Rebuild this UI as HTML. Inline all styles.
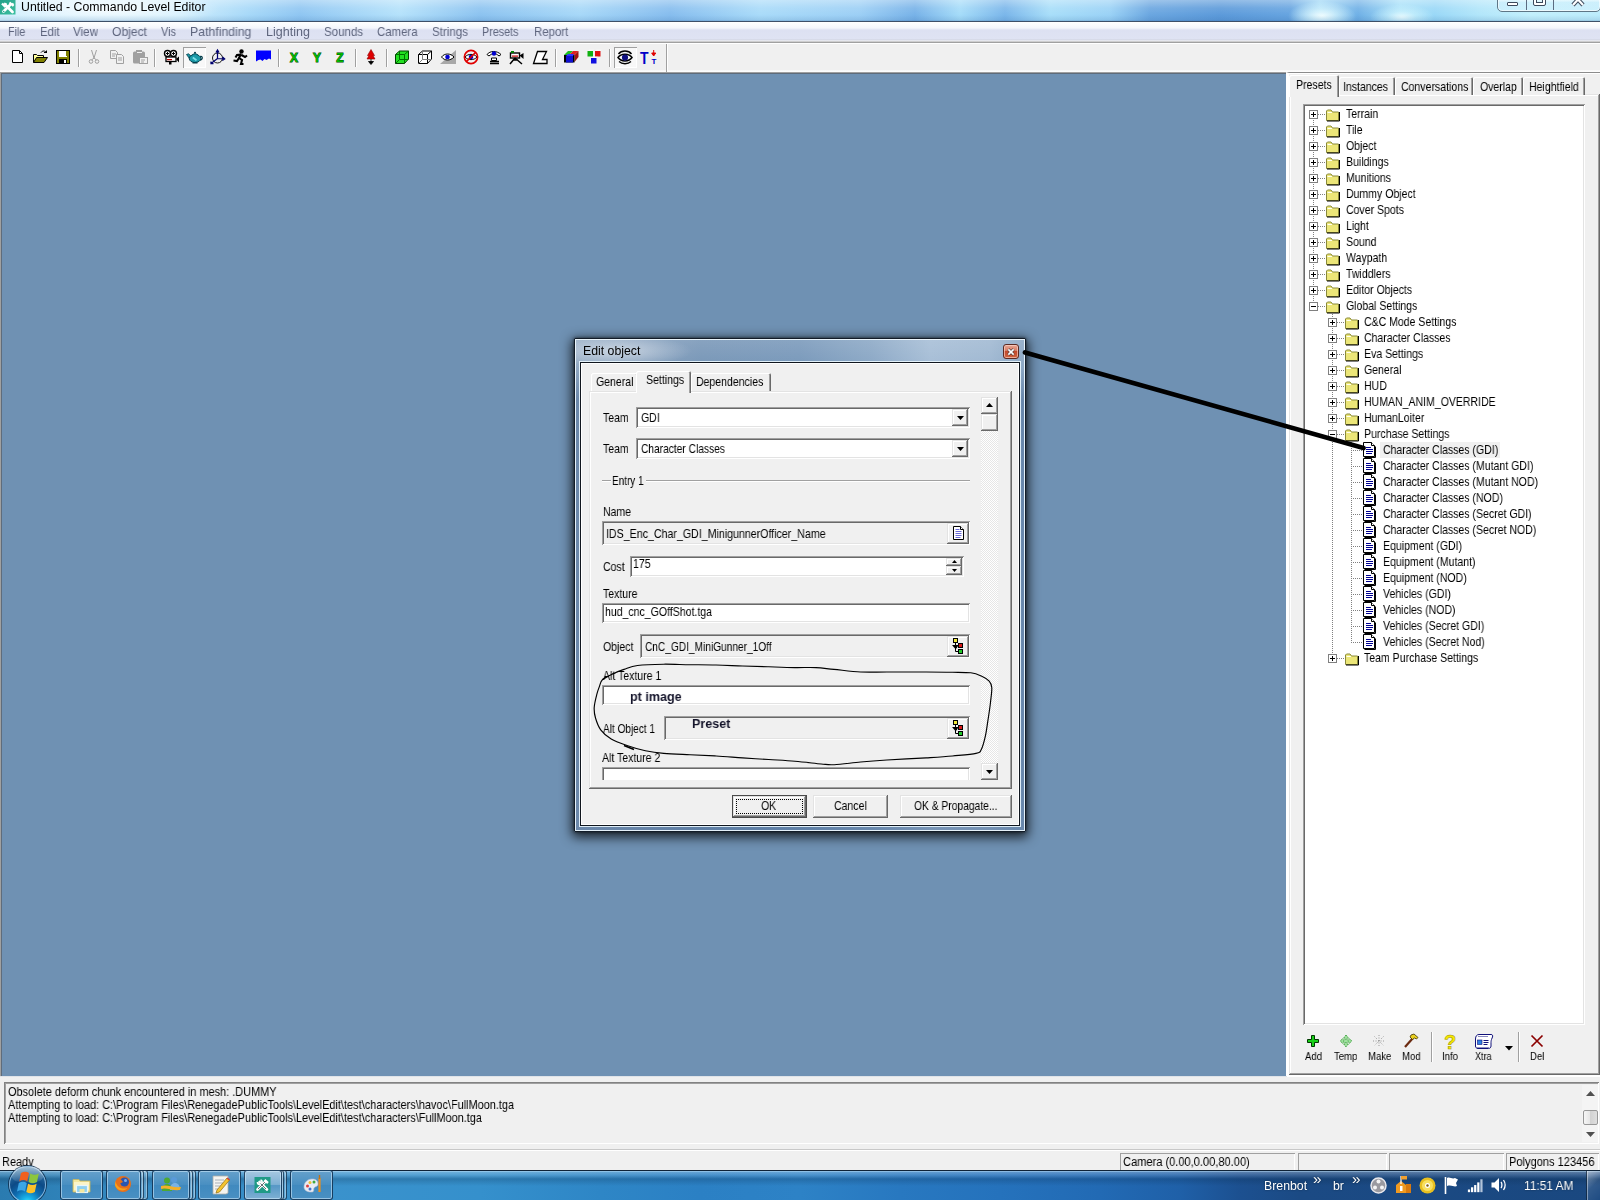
<!DOCTYPE html><html><head><meta charset="utf-8"><title>Untitled - Commando Level Editor</title><style>
*{box-sizing:border-box;margin:0;padding:0}
html,body{width:1600px;height:1200px;overflow:hidden}
body{position:relative;background:#f0f0f0;font-family:"Liberation Sans",sans-serif;font-size:12px;color:#000;line-height:1}
.a{position:absolute}
.t{position:absolute;white-space:pre;transform-origin:0 50%;line-height:14px;height:14px;will-change:transform}
.ms{font-size:12.6px;transform:scaleX(.836)}
.sunk{box-shadow:inset 1px 1px #a0a0a0,inset -1px -1px #fff,inset 2px 2px #696969,inset -2px -2px #e3e3e3}
.rais{box-shadow:inset -1px -1px #696969,inset 1px 1px #e3e3e3,inset -2px -2px #a0a0a0,inset 2px 2px #fff;background:#f0f0f0}
.thin{box-shadow:inset 1px 1px #a0a0a0,inset -1px -1px #fff}
.sep{position:absolute;width:2px;border-left:1px solid #a0a0a0;border-right:1px solid #fff}
svg{position:absolute;overflow:visible}
#title{left:0;top:0;width:1600px;height:22px;
 background:
 linear-gradient(to bottom,rgba(255,255,255,.35) 0,rgba(255,255,255,.1) 8px,rgba(255,255,255,0) 15px,rgba(30,80,140,.12) 20px,rgba(30,80,140,.3) 21px,#3e5068 21px,#3e5068 22px),
 radial-gradient(ellipse 34px 15px at 1322px 16px,rgba(240,253,255,1),rgba(225,250,255,.6) 45%,rgba(220,250,255,0)),
 radial-gradient(ellipse 32px 13px at 1402px 17px,rgba(235,252,255,.95),rgba(215,248,255,.5) 45%,rgba(200,245,255,0)),
 radial-gradient(ellipse 110px 18px at 110px 9px,rgba(255,255,255,.8),rgba(255,255,255,0)),
 linear-gradient(to right,#d4f0fd 0,#cfeefd 180px,#a6d8f8 250px,#8fc6f2 300px,#b5e2fb 400px,#8cc3f0 480px,#a7d8f8 580px,#86bdee 670px,#a9dbf9 760px,#9ccff5 860px,#77b2e8 915px,#a5dcf9 960px,#7ab6ea 1005px,#a8def9 1050px,#9ad2f6 1110px,#6aa6e0 1150px,#5c9ada 1220px,#66a4e0 1290px,#9bd6f6 1320px,#6fb0e6 1358px,#a6e0f9 1400px,#9ad8f7 1435px,#b2e6fa 1480px,#c2effc 1530px,#bcecfc 1600px)}
#menu{left:0;top:22px;width:1600px;height:22px;background:linear-gradient(to bottom,#fff 0,#f4f6fc 6px,#e9ecf7 7px,#dde1f2 8px,#dfe3f3 17px,#cfd2de 18px,#fbfbfd 19px,#a0a0a0 20px,#a0a0a0 21px,#fff 21px)}
#menu .t{color:#5f667e;font-size:12.4px;top:3px;transform:scaleX(1.0)}
#vp{left:0;top:72px;width:1286px;height:1004px;background:#6f91b3;border-left:1px solid #a0a0a0;border-top:1px solid #a0a0a0;box-shadow:inset 1px 1px #5f6c7b}
</style></head><body>
<div id="title" class="a"></div>
<svg style="left:0;top:0" width="16" height="16" viewBox="0 0 16 16"><defs><linearGradient id="gi" x1="0" y1="0" x2="1" y2="1"><stop offset="0" stop-color="#25a088"/><stop offset="1" stop-color="#3cc0a0"/></linearGradient></defs><rect width="15.500" height="14.500" fill="url(#gi)"/><path d="M3.500 11.500L10.500 4.500" stroke="#fff" stroke-width="2.800" stroke-linecap="round"/><path d="M12.500 12L6 5.500" stroke="#fff" stroke-width="2.800" stroke-linecap="round"/><path d="M3 5.500l1.500-3 2.500 1-1 3.500z" fill="#fff"/><path d="M2 3.500l3.500 3.500" stroke="#fff" stroke-width="2.400"/><path d="M9.500 2.500l4 3.500M13.500 3.500l-1.500 1.500" stroke="#fff" stroke-width="2.200"/><circle cx="3.700" cy="11.500" r=".8" fill="#2aa890"/></svg>
<div class="t" style="left:21px;top:0px;font-size:12.3px;transform:scaleX(1.0)">Untitled - Commando Level Editor</div>
<div class="a" style="left:1497px;top:-8px;width:104px;height:20px;border:1px solid #5f7686;border-radius:0 0 5px 5px;background:linear-gradient(to bottom,rgba(255,255,255,.55),rgba(255,255,255,.3) 45%,rgba(200,235,250,.3) 50%,rgba(220,245,255,.45));box-shadow:inset 0 0 0 1px rgba(255,255,255,.6)"></div>
<div class="a" style="left:1526px;top:0;width:1px;height:10px;background:#5b6b80"></div><div class="a" style="left:1553px;top:0;width:1px;height:10px;background:#5b6b80"></div>
<div class="a" style="left:1507px;top:2px;width:11px;height:4px;border:1px solid #3d4a5c;background:#fff;border-radius:1px"></div>
<div class="a" style="left:1534px;top:-4px;width:11px;height:9px;border:2px solid #fff;outline:1px solid #3d4a5c;border-radius:1px;box-shadow:inset 0 0 0 1px #3d4a5c"></div>
<svg style="left:1571px;top:-4px" width="14" height="10" viewBox="0 0 14 10"><path d="M2 -2 L12 9 M12 -2 L2 9" stroke="#3d4a5c" stroke-width="4.2"/><path d="M2 -2 L12 9 M12 -2 L2 9" stroke="#fff" stroke-width="2.2"/></svg>
<div id="menu" class="a">
<div class="t" style="left:7.5px;transform:scaleX(0.87)">File</div>
<div class="t" style="left:39.5px;transform:scaleX(0.915)">Edit</div>
<div class="t" style="left:73px;transform:scaleX(0.94)">View</div>
<div class="t" style="left:112px;transform:scaleX(0.977)">Object</div>
<div class="t" style="left:161px;transform:scaleX(0.885)">Vis</div>
<div class="t" style="left:190px;transform:scaleX(0.99)">Pathfinding</div>
<div class="t" style="left:266px;transform:scaleX(1.01)">Lighting</div>
<div class="t" style="left:324px;transform:scaleX(0.93)">Sounds</div>
<div class="t" style="left:377px;transform:scaleX(0.92)">Camera</div>
<div class="t" style="left:432px;transform:scaleX(0.935)">Strings</div>
<div class="t" style="left:482px;transform:scaleX(0.868)">Presets</div>
<div class="t" style="left:533.5px;transform:scaleX(0.922)">Report</div>
</div>
<div class="a" style="left:0;top:44px;width:1600px;height:28px;background:#f0f0f0"></div>
<div class="a" style="left:0;top:70px;width:1600px;height:2px;background:linear-gradient(#f6f6f6,#fff)"></div>
<div class="a" style="left:183px;top:47px;width:23px;height:21px;background:#f8f8f8;box-shadow:inset 1px 1px #a0a0a0,inset -1px -1px #fff"></div>
<div class="a" style="left:614px;top:47px;width:23px;height:21px;background:#f8f8f8;box-shadow:inset 1px 1px #a0a0a0,inset -1px -1px #fff"></div>
<svg style="left:9px;top:49px" width="16" height="16" viewBox="0 0 16 16"><path d="M3.5 1.5h7l3 3v9h-10z" fill="#fff" stroke="#000"/><path d="M10.5 1.5v3h3" fill="none" stroke="#000"/></svg>
<svg style="left:32px;top:49px" width="16" height="16" viewBox="0 0 16 16"><path d="M1.5 13.5v-8h3l1 1h6v2" fill="#ffff99" stroke="#000"/><path d="M1.5 13.5l3-5h11l-3.5 5z" fill="#808000" stroke="#000"/><path d="M9 3.5c1.5-2 4-2 5.5 0M14.5 4v-2.5M14.5 3.5h-2.5" stroke="#000" fill="none"/></svg>
<svg style="left:55px;top:49px" width="16" height="16" viewBox="0 0 16 16"><rect x="1.5" y="1.5" width="13" height="13" fill="#808000" stroke="#000"/><rect x="4" y="2" width="8" height="6" fill="#fff"/><rect x="11" y="2" width="1" height="5" fill="#808000"/><rect x="4" y="10" width="8" height="4" fill="#000"/><rect x="9" y="11" width="2" height="3" fill="#fff"/></svg>
<div class="sep" style="left:78px;top:49px;height:18px"></div>
<svg style="left:86px;top:49px" width="16" height="16" viewBox="0 0 16 16"><path d="M5.5 1l2.5 8 2.5-8M8 9l-2.5 2M8 9l2.5 2" stroke="#a0a0a0" fill="none"/><circle cx="5" cy="12.5" r="1.8" fill="none" stroke="#a0a0a0"/><circle cx="11" cy="12.5" r="1.8" fill="none" stroke="#a0a0a0"/></svg>
<svg style="left:109px;top:49px" width="16" height="16" viewBox="0 0 16 16"><path d="M1.5 1.5h5l2 2v6h-7z" fill="#f0f0f0" stroke="#a0a0a0"/><path d="M7.5 5.5h5l2 2v7h-7z" fill="#f0f0f0" stroke="#a0a0a0"/><path d="M3 5h4M3 7h3M9 9h4M9 11h4" stroke="#a0a0a0"/></svg>
<svg style="left:132px;top:49px" width="16" height="16" viewBox="0 0 16 16"><rect x="1" y="2.5" width="12" height="12" rx="1.5" fill="#a0a0a0"/><rect x="4" y="1" width="6" height="3" fill="#a0a0a0"/><rect x="5" y="3" width="5" height="1" fill="#f0f0f0"/><rect x="7.5" y="8.5" width="8" height="6" fill="#f0f0f0" stroke="#a0a0a0"/><path d="M9 11h4M9 13h3" stroke="#a0a0a0"/></svg>
<div class="sep" style="left:154px;top:49px;height:18px"></div>
<svg style="left:163px;top:49px" width="16" height="16" viewBox="0 0 16 16"><circle cx="4.5" cy="4.5" r="3" fill="#fff" stroke="#000" stroke-width="1.4"/><circle cx="10.5" cy="4.5" r="3" fill="#fff" stroke="#000" stroke-width="1.4"/><path d="M4.5 3v3M3 4.5h3M10.5 3v3M9 4.5h3" stroke="#000"/><rect x="3" y="8" width="10" height="4.5" fill="#fff" stroke="#000" stroke-width="1.3"/><path d="M13 10l3-2.5v6z" fill="#000"/><rect x="4" y="10" width="5" height="1.2" fill="#c00000"/><rect x="6" y="12.5" width="2.5" height="3" fill="#000"/></svg>
<svg style="left:186px;top:49px" width="16" height="16" viewBox="0 0 16 16"><path d="M4.200 10.500L.5 5.500 2.500 4.800 5.500 7.500z" fill="#1a9aa8" stroke="#003a48" stroke-width=".8"/><path d="M14 7.500c2.800-1.200 3 3 .2 3.600" fill="none" stroke="#003a48" stroke-width="1.300"/><ellipse cx="9" cy="9.500" rx="5.800" ry="4" fill="#1a9aa8" stroke="#003a48" stroke-width=".9"/><path d="M5.500 6.800c1-2.600 6-2.600 7 0" fill="#1a9aa8" stroke="#003a48" stroke-width=".8"/><circle cx="9" cy="3.700" r="1" fill="#003a48"/><path d="M6.500 13.200h5v1.300h-5z" fill="#003a48"/><path d="M6.800 8.500l3.700 2.700" stroke="#7fe0ea" stroke-width="1.700"/></svg>
<svg style="left:209px;top:49px" width="16" height="16" viewBox="0 0 16 16"><circle cx="8.500" cy="9" r="5" fill="none" stroke="#000" stroke-width=".9"/><path d="M8.500 9.500V1.500M7 3.500L8.500 1 10 3.500M8.500 9.500l7 .5M13.500 8l2.200 2-2.400 1.600M8.500 9.500l-6.500 5M2 12.500v2.200h2.500" stroke="#000070" fill="none" stroke-width="1.250"/></svg>
<svg style="left:232px;top:49px" width="16" height="16" viewBox="0 0 16 16"><circle cx="9.5" cy="2.5" r="2.2" fill="#000"/><path d="M9 5l-2 4 3 2-1 4h2.5M7 9l-2 3-3.5-.5M9 5.5l-4 .5-1.5 2.5M9.5 6l3.5 2 2-1.5" stroke="#000" stroke-width="2.1" fill="none"/></svg>
<svg style="left:255px;top:49px" width="16" height="16" viewBox="0 0 16 16"><path d="M1 1.500h15v9l-2-1-2.500 1.500-2-1-2 2-2-1.500-2 .5-2.500 1.500z" fill="#0000ff"/></svg>
<div class="sep" style="left:278px;top:49px;height:18px"></div>
<svg style="left:286px;top:49px" width="16" height="16" viewBox="0 0 16 16"><text x="8" y="13" text-anchor="middle" font-family="Liberation Sans,sans-serif" font-weight="bold" font-size="12" fill="#00b800" stroke="#004800" stroke-width=".9" paint-order="stroke">X</text></svg>
<svg style="left:309px;top:49px" width="16" height="16" viewBox="0 0 16 16"><text x="8" y="13" text-anchor="middle" font-family="Liberation Sans,sans-serif" font-weight="bold" font-size="12" fill="#00b800" stroke="#004800" stroke-width=".9" paint-order="stroke">Y</text></svg>
<svg style="left:332px;top:49px" width="16" height="16" viewBox="0 0 16 16"><text x="8" y="13" text-anchor="middle" font-family="Liberation Sans,sans-serif" font-weight="bold" font-size="12" fill="#00b800" stroke="#004800" stroke-width=".9" paint-order="stroke">Z</text></svg>
<div class="sep" style="left:355px;top:49px;height:18px"></div>
<svg style="left:363px;top:49px" width="16" height="16" viewBox="0 0 16 16"><path d="M8 0.500l3.500 6h-1.500l2 3.500h-8l2-3.500h-1.500z" fill="#e00000" stroke="#900000" stroke-width=".6"/><path d="M8 10v3M5.500 12.500h5L8 15.500z" fill="#000" stroke="#000" stroke-width=".8"/></svg>
<div class="sep" style="left:386px;top:49px;height:18px"></div>
<svg style="left:394px;top:49px" width="16" height="16" viewBox="0 0 16 16"><path d="M1.500 5.500l4-3.500h9v8l-4 4.500h-9z" fill="#22e022" stroke="#004000"/><path d="M1.500 5.500h9v9M10.500 5.500l4-3.500M5.500 2v8.500h9M5.500 10.500l-4 4" fill="none" stroke="#007000"/></svg>
<svg style="left:417px;top:49px" width="16" height="16" viewBox="0 0 16 16"><path d="M1.500 5.500l4-3.500h9v8l-4 4.500h-9z" fill="#fff" stroke="#000"/><path d="M1.500 5.500h9v9M10.500 5.500l4-3.500" fill="none" stroke="#000"/><path d="M5.500 2v8.500h9M5.500 10.500l-4 4" fill="none" stroke="#808080"/></svg>
<svg style="left:440px;top:49px" width="16" height="16" viewBox="0 0 16 16"><path d="M16 1v14h-16z" fill="#a8a8a8"/><path d="M1.500 8c3-4 9-4 12.500 0-3.500 4-9.500 4-12.500 0z" fill="#fff" stroke="#000"/><circle cx="7.500" cy="8" r="2.300" fill="#0000d0"/></svg>
<svg style="left:463px;top:49px" width="16" height="16" viewBox="0 0 16 16"><path d="M2 8c3-3.500 9-3.500 12 0-3 3.500-9 3.500-12 0z" fill="#fff" stroke="#000"/><circle cx="8" cy="8" r="2.300" fill="#0000d0"/><circle cx="8" cy="8" r="6.600" fill="none" stroke="#e00000" stroke-width="1.700"/><path d="M3.500 12.500l9-9" stroke="#e00000" stroke-width="1.700"/></svg>
<svg style="left:486px;top:49px" width="16" height="16" viewBox="0 0 16 16"><path d="M1 5.500c3-4 10-4 14 0l-2 1.500c-3-3-7-3-10 0z" fill="#fff" stroke="#000"/><circle cx="8" cy="4.500" r="2.200" fill="#0000d0"/><path d="M5.500 9h5v2.500h-5z" fill="#fff" stroke="#000"/><path d="M4 12.500h9M4 14.500h9" stroke="#000" stroke-width="1.300"/></svg>
<svg style="left:508px;top:49px" width="16" height="16" viewBox="0 0 16 16"><rect x="2.500" y="4" width="9" height="5" fill="#fff" stroke="#000" stroke-width="1.400"/><path d="M11.500 6.500l4-2.500v6z" fill="#000"/><rect x="3" y="2" width="3" height="2" fill="#008000"/><rect x="4" y="6.500" width="6" height="1.200" fill="#c00000"/><path d="M7 9l-5 6M7 9l7 6M5 11h5" stroke="#000" stroke-width="1.500" fill="none"/></svg>
<svg style="left:532px;top:49px" width="16" height="16" viewBox="0 0 16 16"><path d="M5.500 2.500h9l-4 8h4.500v4h-13.500z" fill="#fff" stroke="#000" stroke-width="1.300"/></svg>
<div class="sep" style="left:555px;top:49px;height:18px"></div>
<svg style="left:563px;top:49px" width="16" height="16" viewBox="0 0 16 16"><path d="M1 6l4-4h5l-4 4z" fill="#20c020"/><path d="M6 6l4-4h5.500l-4 4z" fill="#e02020"/><path d="M11.500 6l4-4v6l-4 5z" fill="#a01010"/><rect x="1" y="6" width="10.500" height="7.500" fill="#000"/><rect x="3" y="7" width="7" height="6.500" fill="#1010d0"/><path d="M3 7l2-2h6l-1 2z" fill="#3030ff"/></svg>
<svg style="left:586px;top:49px" width="16" height="16" viewBox="0 0 16 16"><rect x="1.500" y="2" width="5.500" height="5.500" fill="#10b010"/><rect x="9" y="2" width="5.500" height="5.500" fill="#e01010"/><rect x="5" y="9" width="5.500" height="5.500" fill="#1010e0"/><path d="M1.500 2l1.500-1.500h5.500l-1.500 1.500zM9 2l1.500-1.500h5.500l-1.500 1.500zM5 9l1.500-1.500h5.500l-1.500 1.500z" fill="#fff" opacity=".45"/></svg>
<div class="sep" style="left:609px;top:49px;height:18px"></div>
<svg style="left:617px;top:49px" width="16" height="16" viewBox="0 0 16 16"><path d="M1.500 5c3-4 10-4 13 0" fill="none" stroke="#000" stroke-width="1.400"/><path d="M1 8.500c3-4.500 11-4.500 14 0-3 4.500-11 4.500-14 0z" fill="#fff" stroke="#000" stroke-width="1.500"/><circle cx="8" cy="8.500" r="3.100" fill="#101080"/><path d="M2 12.500c3 3 9 3 12 0" fill="none" stroke="#000" stroke-width="1.300"/></svg>
<svg style="left:640px;top:49px" width="18" height="16" viewBox="0 0 18 16"><text x="0" y="14.500" font-family="Liberation Sans,sans-serif" font-weight="bold" font-size="17" fill="#0000c8" transform="scale(.82,1)">T</text><text x="11.500" y="15" font-family="Liberation Sans,sans-serif" font-weight="bold" font-size="8" fill="#0000c8">T</text><path d="M13.700 1v4M11.700 4h4l-2 3z" stroke="#e00000" fill="#e00000" stroke-width="1"/></svg>
<div class="sep" style="left:666px;top:44px;height:28px"></div>
<div id="vp" class="a"></div>
<div class="a" style="left:1286px;top:72px;width:314px;height:1005px;background:#f0f0f0;border-top:1px solid #8c8c8c;border-left:3px solid #fff;border-bottom:1px solid #a0a0a0"></div><div class="a" style="left:1289px;top:1075px;width:311px;height:1px;background:#fff"></div>
<div class="a" style="left:1289px;top:73px;width:311px;height:1px;background:#fff"></div>
<div class="a rais" style="left:1289px;top:94px;width:311px;height:981px;background:#f0f0f0"></div>
<div class="a" style="left:1339px;top:77px;width:56px;height:18px;background:#f0f0f0;border-radius:2px 2px 0 0;box-shadow:inset 1px 1px #fff,inset -1px 0 #696969,inset -2px 0 #a0a0a0"></div>
<div class="t ms" style="left:1343px;top:79.6px">Instances</div>
<div class="a" style="left:1395px;top:77px;width:78px;height:18px;background:#f0f0f0;border-radius:2px 2px 0 0;box-shadow:inset 1px 1px #fff,inset -1px 0 #696969,inset -2px 0 #a0a0a0"></div>
<div class="t ms" style="left:1401px;top:79.6px">Conversations</div>
<div class="a" style="left:1473px;top:77px;width:50px;height:18px;background:#f0f0f0;border-radius:2px 2px 0 0;box-shadow:inset 1px 1px #fff,inset -1px 0 #696969,inset -2px 0 #a0a0a0"></div>
<div class="t ms" style="left:1480px;top:79.6px">Overlap</div>
<div class="a" style="left:1523px;top:77px;width:62px;height:18px;background:#f0f0f0;border-radius:2px 2px 0 0;box-shadow:inset 1px 1px #fff,inset -1px 0 #696969,inset -2px 0 #a0a0a0"></div>
<div class="t ms" style="left:1529px;top:79.6px">Heightfield</div>
<div class="a" style="left:1289px;top:75px;width:50px;height:22px;background:#f0f0f0;border-radius:2px 2px 0 0;box-shadow:inset 1px 1px #fff,inset -1px 0 #696969,inset -2px 0 #a0a0a0"></div>
<div class="t ms" style="left:1296px;top:77.6px">Presets</div>
<div class="a sunk" style="left:1303px;top:104px;width:282px;height:921px;background:#fff"></div>
<div class="a" style="left:1313px;top:114px;width:1px;height:192px;background:repeating-linear-gradient(to bottom,#808080 0 1px,transparent 1px 2px)"></div>
<div class="a" style="left:1332px;top:314px;width:1px;height:344px;background:repeating-linear-gradient(to bottom,#808080 0 1px,transparent 1px 2px)"></div>
<div class="a" style="left:1351px;top:442px;width:1px;height:201px;background:repeating-linear-gradient(to bottom,#808080 0 1px,transparent 1px 2px)"></div>
<div class="a" style="left:1318px;top:114px;width:7px;height:1px;background:repeating-linear-gradient(to right,#808080 0 1px,transparent 1px 2px)"></div>
<div class="a" style="left:1309px;top:110px;width:9px;height:9px;background:#fff;border:1px solid #808080"></div>
<div class="a" style="left:1311px;top:114px;width:5px;height:1px;background:#000"></div>
<div class="a" style="left:1313px;top:112px;width:1px;height:5px;background:#000"></div>
<svg style="left:1325px;top:107px" width="16" height="16" viewBox="0 0 16 16"><path d="M1.500 4v9.500h12v-8.500h-6l-1.500-2h-3.500z" fill="#ece678" stroke="#8a8a3a"/><path d="M2 14h12.500v-9" fill="none" stroke="#000"/><path d="M2.500 5.500h4.500" stroke="#fffff0"/></svg>
<div class="t ms" style="left:1346px;top:107px">Terrain</div>
<div class="a" style="left:1318px;top:130px;width:7px;height:1px;background:repeating-linear-gradient(to right,#808080 0 1px,transparent 1px 2px)"></div>
<div class="a" style="left:1309px;top:126px;width:9px;height:9px;background:#fff;border:1px solid #808080"></div>
<div class="a" style="left:1311px;top:130px;width:5px;height:1px;background:#000"></div>
<div class="a" style="left:1313px;top:128px;width:1px;height:5px;background:#000"></div>
<svg style="left:1325px;top:123px" width="16" height="16" viewBox="0 0 16 16"><path d="M1.500 4v9.500h12v-8.500h-6l-1.500-2h-3.500z" fill="#ece678" stroke="#8a8a3a"/><path d="M2 14h12.500v-9" fill="none" stroke="#000"/><path d="M2.500 5.500h4.500" stroke="#fffff0"/></svg>
<div class="t ms" style="left:1346px;top:123px">Tile</div>
<div class="a" style="left:1318px;top:146px;width:7px;height:1px;background:repeating-linear-gradient(to right,#808080 0 1px,transparent 1px 2px)"></div>
<div class="a" style="left:1309px;top:142px;width:9px;height:9px;background:#fff;border:1px solid #808080"></div>
<div class="a" style="left:1311px;top:146px;width:5px;height:1px;background:#000"></div>
<div class="a" style="left:1313px;top:144px;width:1px;height:5px;background:#000"></div>
<svg style="left:1325px;top:139px" width="16" height="16" viewBox="0 0 16 16"><path d="M1.500 4v9.500h12v-8.500h-6l-1.500-2h-3.500z" fill="#ece678" stroke="#8a8a3a"/><path d="M2 14h12.500v-9" fill="none" stroke="#000"/><path d="M2.500 5.500h4.500" stroke="#fffff0"/></svg>
<div class="t ms" style="left:1346px;top:139px">Object</div>
<div class="a" style="left:1318px;top:162px;width:7px;height:1px;background:repeating-linear-gradient(to right,#808080 0 1px,transparent 1px 2px)"></div>
<div class="a" style="left:1309px;top:158px;width:9px;height:9px;background:#fff;border:1px solid #808080"></div>
<div class="a" style="left:1311px;top:162px;width:5px;height:1px;background:#000"></div>
<div class="a" style="left:1313px;top:160px;width:1px;height:5px;background:#000"></div>
<svg style="left:1325px;top:155px" width="16" height="16" viewBox="0 0 16 16"><path d="M1.500 4v9.500h12v-8.500h-6l-1.500-2h-3.500z" fill="#ece678" stroke="#8a8a3a"/><path d="M2 14h12.500v-9" fill="none" stroke="#000"/><path d="M2.500 5.500h4.500" stroke="#fffff0"/></svg>
<div class="t ms" style="left:1346px;top:155px">Buildings</div>
<div class="a" style="left:1318px;top:178px;width:7px;height:1px;background:repeating-linear-gradient(to right,#808080 0 1px,transparent 1px 2px)"></div>
<div class="a" style="left:1309px;top:174px;width:9px;height:9px;background:#fff;border:1px solid #808080"></div>
<div class="a" style="left:1311px;top:178px;width:5px;height:1px;background:#000"></div>
<div class="a" style="left:1313px;top:176px;width:1px;height:5px;background:#000"></div>
<svg style="left:1325px;top:171px" width="16" height="16" viewBox="0 0 16 16"><path d="M1.500 4v9.500h12v-8.500h-6l-1.500-2h-3.500z" fill="#ece678" stroke="#8a8a3a"/><path d="M2 14h12.500v-9" fill="none" stroke="#000"/><path d="M2.500 5.500h4.500" stroke="#fffff0"/></svg>
<div class="t ms" style="left:1346px;top:171px">Munitions</div>
<div class="a" style="left:1318px;top:194px;width:7px;height:1px;background:repeating-linear-gradient(to right,#808080 0 1px,transparent 1px 2px)"></div>
<div class="a" style="left:1309px;top:190px;width:9px;height:9px;background:#fff;border:1px solid #808080"></div>
<div class="a" style="left:1311px;top:194px;width:5px;height:1px;background:#000"></div>
<div class="a" style="left:1313px;top:192px;width:1px;height:5px;background:#000"></div>
<svg style="left:1325px;top:187px" width="16" height="16" viewBox="0 0 16 16"><path d="M1.500 4v9.500h12v-8.500h-6l-1.500-2h-3.500z" fill="#ece678" stroke="#8a8a3a"/><path d="M2 14h12.500v-9" fill="none" stroke="#000"/><path d="M2.500 5.500h4.500" stroke="#fffff0"/></svg>
<div class="t ms" style="left:1346px;top:187px">Dummy Object</div>
<div class="a" style="left:1318px;top:210px;width:7px;height:1px;background:repeating-linear-gradient(to right,#808080 0 1px,transparent 1px 2px)"></div>
<div class="a" style="left:1309px;top:206px;width:9px;height:9px;background:#fff;border:1px solid #808080"></div>
<div class="a" style="left:1311px;top:210px;width:5px;height:1px;background:#000"></div>
<div class="a" style="left:1313px;top:208px;width:1px;height:5px;background:#000"></div>
<svg style="left:1325px;top:203px" width="16" height="16" viewBox="0 0 16 16"><path d="M1.500 4v9.500h12v-8.500h-6l-1.500-2h-3.500z" fill="#ece678" stroke="#8a8a3a"/><path d="M2 14h12.500v-9" fill="none" stroke="#000"/><path d="M2.500 5.500h4.500" stroke="#fffff0"/></svg>
<div class="t ms" style="left:1346px;top:203px">Cover Spots</div>
<div class="a" style="left:1318px;top:226px;width:7px;height:1px;background:repeating-linear-gradient(to right,#808080 0 1px,transparent 1px 2px)"></div>
<div class="a" style="left:1309px;top:222px;width:9px;height:9px;background:#fff;border:1px solid #808080"></div>
<div class="a" style="left:1311px;top:226px;width:5px;height:1px;background:#000"></div>
<div class="a" style="left:1313px;top:224px;width:1px;height:5px;background:#000"></div>
<svg style="left:1325px;top:219px" width="16" height="16" viewBox="0 0 16 16"><path d="M1.500 4v9.500h12v-8.500h-6l-1.500-2h-3.500z" fill="#ece678" stroke="#8a8a3a"/><path d="M2 14h12.500v-9" fill="none" stroke="#000"/><path d="M2.500 5.500h4.500" stroke="#fffff0"/></svg>
<div class="t ms" style="left:1346px;top:219px">Light</div>
<div class="a" style="left:1318px;top:242px;width:7px;height:1px;background:repeating-linear-gradient(to right,#808080 0 1px,transparent 1px 2px)"></div>
<div class="a" style="left:1309px;top:238px;width:9px;height:9px;background:#fff;border:1px solid #808080"></div>
<div class="a" style="left:1311px;top:242px;width:5px;height:1px;background:#000"></div>
<div class="a" style="left:1313px;top:240px;width:1px;height:5px;background:#000"></div>
<svg style="left:1325px;top:235px" width="16" height="16" viewBox="0 0 16 16"><path d="M1.500 4v9.500h12v-8.500h-6l-1.500-2h-3.500z" fill="#ece678" stroke="#8a8a3a"/><path d="M2 14h12.500v-9" fill="none" stroke="#000"/><path d="M2.500 5.500h4.500" stroke="#fffff0"/></svg>
<div class="t ms" style="left:1346px;top:235px">Sound</div>
<div class="a" style="left:1318px;top:258px;width:7px;height:1px;background:repeating-linear-gradient(to right,#808080 0 1px,transparent 1px 2px)"></div>
<div class="a" style="left:1309px;top:254px;width:9px;height:9px;background:#fff;border:1px solid #808080"></div>
<div class="a" style="left:1311px;top:258px;width:5px;height:1px;background:#000"></div>
<div class="a" style="left:1313px;top:256px;width:1px;height:5px;background:#000"></div>
<svg style="left:1325px;top:251px" width="16" height="16" viewBox="0 0 16 16"><path d="M1.500 4v9.500h12v-8.500h-6l-1.500-2h-3.500z" fill="#ece678" stroke="#8a8a3a"/><path d="M2 14h12.500v-9" fill="none" stroke="#000"/><path d="M2.500 5.500h4.500" stroke="#fffff0"/></svg>
<div class="t ms" style="left:1346px;top:251px">Waypath</div>
<div class="a" style="left:1318px;top:274px;width:7px;height:1px;background:repeating-linear-gradient(to right,#808080 0 1px,transparent 1px 2px)"></div>
<div class="a" style="left:1309px;top:270px;width:9px;height:9px;background:#fff;border:1px solid #808080"></div>
<div class="a" style="left:1311px;top:274px;width:5px;height:1px;background:#000"></div>
<div class="a" style="left:1313px;top:272px;width:1px;height:5px;background:#000"></div>
<svg style="left:1325px;top:267px" width="16" height="16" viewBox="0 0 16 16"><path d="M1.500 4v9.500h12v-8.500h-6l-1.500-2h-3.500z" fill="#ece678" stroke="#8a8a3a"/><path d="M2 14h12.500v-9" fill="none" stroke="#000"/><path d="M2.500 5.500h4.500" stroke="#fffff0"/></svg>
<div class="t ms" style="left:1346px;top:267px">Twiddlers</div>
<div class="a" style="left:1318px;top:290px;width:7px;height:1px;background:repeating-linear-gradient(to right,#808080 0 1px,transparent 1px 2px)"></div>
<div class="a" style="left:1309px;top:286px;width:9px;height:9px;background:#fff;border:1px solid #808080"></div>
<div class="a" style="left:1311px;top:290px;width:5px;height:1px;background:#000"></div>
<div class="a" style="left:1313px;top:288px;width:1px;height:5px;background:#000"></div>
<svg style="left:1325px;top:283px" width="16" height="16" viewBox="0 0 16 16"><path d="M1.500 4v9.500h12v-8.500h-6l-1.500-2h-3.500z" fill="#ece678" stroke="#8a8a3a"/><path d="M2 14h12.500v-9" fill="none" stroke="#000"/><path d="M2.500 5.500h4.500" stroke="#fffff0"/></svg>
<div class="t ms" style="left:1346px;top:283px">Editor Objects</div>
<div class="a" style="left:1318px;top:306px;width:7px;height:1px;background:repeating-linear-gradient(to right,#808080 0 1px,transparent 1px 2px)"></div>
<div class="a" style="left:1309px;top:302px;width:9px;height:9px;background:#fff;border:1px solid #808080"></div>
<div class="a" style="left:1311px;top:306px;width:5px;height:1px;background:#000"></div>
<svg style="left:1325px;top:299px" width="16" height="16" viewBox="0 0 16 16"><path d="M1.500 4v9.500h12v-8.500h-6l-1.500-2h-3.500z" fill="#ece678" stroke="#8a8a3a"/><path d="M2 14h12.500v-9" fill="none" stroke="#000"/><path d="M2.500 5.500h4.500" stroke="#fffff0"/></svg>
<div class="t ms" style="left:1346px;top:299px">Global Settings</div>
<div class="a" style="left:1337px;top:322px;width:7px;height:1px;background:repeating-linear-gradient(to right,#808080 0 1px,transparent 1px 2px)"></div>
<div class="a" style="left:1328px;top:318px;width:9px;height:9px;background:#fff;border:1px solid #808080"></div>
<div class="a" style="left:1330px;top:322px;width:5px;height:1px;background:#000"></div>
<div class="a" style="left:1332px;top:320px;width:1px;height:5px;background:#000"></div>
<svg style="left:1344px;top:315px" width="16" height="16" viewBox="0 0 16 16"><path d="M1.500 4v9.500h12v-8.500h-6l-1.500-2h-3.500z" fill="#ece678" stroke="#8a8a3a"/><path d="M2 14h12.500v-9" fill="none" stroke="#000"/><path d="M2.500 5.500h4.500" stroke="#fffff0"/></svg>
<div class="t ms" style="left:1364px;top:315px">C&amp;C Mode Settings</div>
<div class="a" style="left:1337px;top:338px;width:7px;height:1px;background:repeating-linear-gradient(to right,#808080 0 1px,transparent 1px 2px)"></div>
<div class="a" style="left:1328px;top:334px;width:9px;height:9px;background:#fff;border:1px solid #808080"></div>
<div class="a" style="left:1330px;top:338px;width:5px;height:1px;background:#000"></div>
<div class="a" style="left:1332px;top:336px;width:1px;height:5px;background:#000"></div>
<svg style="left:1344px;top:331px" width="16" height="16" viewBox="0 0 16 16"><path d="M1.500 4v9.500h12v-8.500h-6l-1.500-2h-3.500z" fill="#ece678" stroke="#8a8a3a"/><path d="M2 14h12.500v-9" fill="none" stroke="#000"/><path d="M2.500 5.500h4.500" stroke="#fffff0"/></svg>
<div class="t ms" style="left:1364px;top:331px">Character Classes</div>
<div class="a" style="left:1337px;top:354px;width:7px;height:1px;background:repeating-linear-gradient(to right,#808080 0 1px,transparent 1px 2px)"></div>
<div class="a" style="left:1328px;top:350px;width:9px;height:9px;background:#fff;border:1px solid #808080"></div>
<div class="a" style="left:1330px;top:354px;width:5px;height:1px;background:#000"></div>
<div class="a" style="left:1332px;top:352px;width:1px;height:5px;background:#000"></div>
<svg style="left:1344px;top:347px" width="16" height="16" viewBox="0 0 16 16"><path d="M1.500 4v9.500h12v-8.500h-6l-1.500-2h-3.500z" fill="#ece678" stroke="#8a8a3a"/><path d="M2 14h12.500v-9" fill="none" stroke="#000"/><path d="M2.500 5.500h4.500" stroke="#fffff0"/></svg>
<div class="t ms" style="left:1364px;top:347px">Eva Settings</div>
<div class="a" style="left:1337px;top:370px;width:7px;height:1px;background:repeating-linear-gradient(to right,#808080 0 1px,transparent 1px 2px)"></div>
<div class="a" style="left:1328px;top:366px;width:9px;height:9px;background:#fff;border:1px solid #808080"></div>
<div class="a" style="left:1330px;top:370px;width:5px;height:1px;background:#000"></div>
<div class="a" style="left:1332px;top:368px;width:1px;height:5px;background:#000"></div>
<svg style="left:1344px;top:363px" width="16" height="16" viewBox="0 0 16 16"><path d="M1.500 4v9.500h12v-8.500h-6l-1.500-2h-3.500z" fill="#ece678" stroke="#8a8a3a"/><path d="M2 14h12.500v-9" fill="none" stroke="#000"/><path d="M2.500 5.500h4.500" stroke="#fffff0"/></svg>
<div class="t ms" style="left:1364px;top:363px">General</div>
<div class="a" style="left:1337px;top:386px;width:7px;height:1px;background:repeating-linear-gradient(to right,#808080 0 1px,transparent 1px 2px)"></div>
<div class="a" style="left:1328px;top:382px;width:9px;height:9px;background:#fff;border:1px solid #808080"></div>
<div class="a" style="left:1330px;top:386px;width:5px;height:1px;background:#000"></div>
<div class="a" style="left:1332px;top:384px;width:1px;height:5px;background:#000"></div>
<svg style="left:1344px;top:379px" width="16" height="16" viewBox="0 0 16 16"><path d="M1.500 4v9.500h12v-8.500h-6l-1.500-2h-3.500z" fill="#ece678" stroke="#8a8a3a"/><path d="M2 14h12.500v-9" fill="none" stroke="#000"/><path d="M2.500 5.500h4.500" stroke="#fffff0"/></svg>
<div class="t ms" style="left:1364px;top:379px">HUD</div>
<div class="a" style="left:1337px;top:402px;width:7px;height:1px;background:repeating-linear-gradient(to right,#808080 0 1px,transparent 1px 2px)"></div>
<div class="a" style="left:1328px;top:398px;width:9px;height:9px;background:#fff;border:1px solid #808080"></div>
<div class="a" style="left:1330px;top:402px;width:5px;height:1px;background:#000"></div>
<div class="a" style="left:1332px;top:400px;width:1px;height:5px;background:#000"></div>
<svg style="left:1344px;top:395px" width="16" height="16" viewBox="0 0 16 16"><path d="M1.500 4v9.500h12v-8.500h-6l-1.500-2h-3.500z" fill="#ece678" stroke="#8a8a3a"/><path d="M2 14h12.500v-9" fill="none" stroke="#000"/><path d="M2.500 5.500h4.500" stroke="#fffff0"/></svg>
<div class="t ms" style="left:1364px;top:395px">HUMAN_ANIM_OVERRIDE</div>
<div class="a" style="left:1337px;top:418px;width:7px;height:1px;background:repeating-linear-gradient(to right,#808080 0 1px,transparent 1px 2px)"></div>
<div class="a" style="left:1328px;top:414px;width:9px;height:9px;background:#fff;border:1px solid #808080"></div>
<div class="a" style="left:1330px;top:418px;width:5px;height:1px;background:#000"></div>
<div class="a" style="left:1332px;top:416px;width:1px;height:5px;background:#000"></div>
<svg style="left:1344px;top:411px" width="16" height="16" viewBox="0 0 16 16"><path d="M1.500 4v9.500h12v-8.500h-6l-1.500-2h-3.500z" fill="#ece678" stroke="#8a8a3a"/><path d="M2 14h12.500v-9" fill="none" stroke="#000"/><path d="M2.500 5.500h4.500" stroke="#fffff0"/></svg>
<div class="t ms" style="left:1364px;top:411px">HumanLoiter</div>
<div class="a" style="left:1337px;top:434px;width:7px;height:1px;background:repeating-linear-gradient(to right,#808080 0 1px,transparent 1px 2px)"></div>
<div class="a" style="left:1328px;top:430px;width:9px;height:9px;background:#fff;border:1px solid #808080"></div>
<div class="a" style="left:1330px;top:434px;width:5px;height:1px;background:#000"></div>
<svg style="left:1344px;top:427px" width="16" height="16" viewBox="0 0 16 16"><path d="M1.500 4v9.500h12v-8.500h-6l-1.500-2h-3.500z" fill="#ece678" stroke="#8a8a3a"/><path d="M2 14h12.500v-9" fill="none" stroke="#000"/><path d="M2.500 5.500h4.500" stroke="#fffff0"/></svg>
<div class="t ms" style="left:1364px;top:427px">Purchase Settings</div>
<div class="a" style="left:1351px;top:450px;width:12px;height:1px;background:repeating-linear-gradient(to right,#808080 0 1px,transparent 1px 2px)"></div>
<svg style="left:1362px;top:442px" width="16" height="16" viewBox="0 0 16 16"><path d="M1.500 .5h8l3 3v11h-11z" fill="#fff" stroke="#000"/><path d="M9.500 .5v3h3" fill="#fff" stroke="#000"/><path d="M4 5.500h5M4 7.500h7M4 9.500h7M4 11.500h6" stroke="#000090"/><path d="M2.500 15.500h11v-11" fill="none" stroke="#000"/></svg>
<div class="a" style="left:1380px;top:442px;width:120px;height:16px;background:#f0f0f0"></div>
<div class="t ms" style="left:1383px;top:443px">Character Classes (GDI)</div>
<div class="a" style="left:1351px;top:466px;width:12px;height:1px;background:repeating-linear-gradient(to right,#808080 0 1px,transparent 1px 2px)"></div>
<svg style="left:1362px;top:458px" width="16" height="16" viewBox="0 0 16 16"><path d="M1.500 .5h8l3 3v11h-11z" fill="#fff" stroke="#000"/><path d="M9.500 .5v3h3" fill="#fff" stroke="#000"/><path d="M4 5.500h5M4 7.500h7M4 9.500h7M4 11.500h6" stroke="#000090"/><path d="M2.500 15.500h11v-11" fill="none" stroke="#000"/></svg>
<div class="t ms" style="left:1383px;top:459px">Character Classes (Mutant GDI)</div>
<div class="a" style="left:1351px;top:482px;width:12px;height:1px;background:repeating-linear-gradient(to right,#808080 0 1px,transparent 1px 2px)"></div>
<svg style="left:1362px;top:474px" width="16" height="16" viewBox="0 0 16 16"><path d="M1.500 .5h8l3 3v11h-11z" fill="#fff" stroke="#000"/><path d="M9.500 .5v3h3" fill="#fff" stroke="#000"/><path d="M4 5.500h5M4 7.500h7M4 9.500h7M4 11.500h6" stroke="#000090"/><path d="M2.500 15.500h11v-11" fill="none" stroke="#000"/></svg>
<div class="t ms" style="left:1383px;top:475px">Character Classes (Mutant NOD)</div>
<div class="a" style="left:1351px;top:498px;width:12px;height:1px;background:repeating-linear-gradient(to right,#808080 0 1px,transparent 1px 2px)"></div>
<svg style="left:1362px;top:490px" width="16" height="16" viewBox="0 0 16 16"><path d="M1.500 .5h8l3 3v11h-11z" fill="#fff" stroke="#000"/><path d="M9.500 .5v3h3" fill="#fff" stroke="#000"/><path d="M4 5.500h5M4 7.500h7M4 9.500h7M4 11.500h6" stroke="#000090"/><path d="M2.500 15.500h11v-11" fill="none" stroke="#000"/></svg>
<div class="t ms" style="left:1383px;top:491px">Character Classes (NOD)</div>
<div class="a" style="left:1351px;top:514px;width:12px;height:1px;background:repeating-linear-gradient(to right,#808080 0 1px,transparent 1px 2px)"></div>
<svg style="left:1362px;top:506px" width="16" height="16" viewBox="0 0 16 16"><path d="M1.500 .5h8l3 3v11h-11z" fill="#fff" stroke="#000"/><path d="M9.500 .5v3h3" fill="#fff" stroke="#000"/><path d="M4 5.500h5M4 7.500h7M4 9.500h7M4 11.500h6" stroke="#000090"/><path d="M2.500 15.500h11v-11" fill="none" stroke="#000"/></svg>
<div class="t ms" style="left:1383px;top:507px">Character Classes (Secret GDI)</div>
<div class="a" style="left:1351px;top:530px;width:12px;height:1px;background:repeating-linear-gradient(to right,#808080 0 1px,transparent 1px 2px)"></div>
<svg style="left:1362px;top:522px" width="16" height="16" viewBox="0 0 16 16"><path d="M1.500 .5h8l3 3v11h-11z" fill="#fff" stroke="#000"/><path d="M9.500 .5v3h3" fill="#fff" stroke="#000"/><path d="M4 5.500h5M4 7.500h7M4 9.500h7M4 11.500h6" stroke="#000090"/><path d="M2.500 15.500h11v-11" fill="none" stroke="#000"/></svg>
<div class="t ms" style="left:1383px;top:523px">Character Classes (Secret NOD)</div>
<div class="a" style="left:1351px;top:546px;width:12px;height:1px;background:repeating-linear-gradient(to right,#808080 0 1px,transparent 1px 2px)"></div>
<svg style="left:1362px;top:538px" width="16" height="16" viewBox="0 0 16 16"><path d="M1.500 .5h8l3 3v11h-11z" fill="#fff" stroke="#000"/><path d="M9.500 .5v3h3" fill="#fff" stroke="#000"/><path d="M4 5.500h5M4 7.500h7M4 9.500h7M4 11.500h6" stroke="#000090"/><path d="M2.500 15.500h11v-11" fill="none" stroke="#000"/></svg>
<div class="t ms" style="left:1383px;top:539px">Equipment (GDI)</div>
<div class="a" style="left:1351px;top:562px;width:12px;height:1px;background:repeating-linear-gradient(to right,#808080 0 1px,transparent 1px 2px)"></div>
<svg style="left:1362px;top:554px" width="16" height="16" viewBox="0 0 16 16"><path d="M1.500 .5h8l3 3v11h-11z" fill="#fff" stroke="#000"/><path d="M9.500 .5v3h3" fill="#fff" stroke="#000"/><path d="M4 5.500h5M4 7.500h7M4 9.500h7M4 11.500h6" stroke="#000090"/><path d="M2.500 15.500h11v-11" fill="none" stroke="#000"/></svg>
<div class="t ms" style="left:1383px;top:555px">Equipment (Mutant)</div>
<div class="a" style="left:1351px;top:578px;width:12px;height:1px;background:repeating-linear-gradient(to right,#808080 0 1px,transparent 1px 2px)"></div>
<svg style="left:1362px;top:570px" width="16" height="16" viewBox="0 0 16 16"><path d="M1.500 .5h8l3 3v11h-11z" fill="#fff" stroke="#000"/><path d="M9.500 .5v3h3" fill="#fff" stroke="#000"/><path d="M4 5.500h5M4 7.500h7M4 9.500h7M4 11.500h6" stroke="#000090"/><path d="M2.500 15.500h11v-11" fill="none" stroke="#000"/></svg>
<div class="t ms" style="left:1383px;top:571px">Equipment (NOD)</div>
<div class="a" style="left:1351px;top:594px;width:12px;height:1px;background:repeating-linear-gradient(to right,#808080 0 1px,transparent 1px 2px)"></div>
<svg style="left:1362px;top:586px" width="16" height="16" viewBox="0 0 16 16"><path d="M1.500 .5h8l3 3v11h-11z" fill="#fff" stroke="#000"/><path d="M9.500 .5v3h3" fill="#fff" stroke="#000"/><path d="M4 5.500h5M4 7.500h7M4 9.500h7M4 11.500h6" stroke="#000090"/><path d="M2.500 15.500h11v-11" fill="none" stroke="#000"/></svg>
<div class="t ms" style="left:1383px;top:587px">Vehicles (GDI)</div>
<div class="a" style="left:1351px;top:610px;width:12px;height:1px;background:repeating-linear-gradient(to right,#808080 0 1px,transparent 1px 2px)"></div>
<svg style="left:1362px;top:602px" width="16" height="16" viewBox="0 0 16 16"><path d="M1.500 .5h8l3 3v11h-11z" fill="#fff" stroke="#000"/><path d="M9.500 .5v3h3" fill="#fff" stroke="#000"/><path d="M4 5.500h5M4 7.500h7M4 9.500h7M4 11.500h6" stroke="#000090"/><path d="M2.500 15.500h11v-11" fill="none" stroke="#000"/></svg>
<div class="t ms" style="left:1383px;top:603px">Vehicles (NOD)</div>
<div class="a" style="left:1351px;top:626px;width:12px;height:1px;background:repeating-linear-gradient(to right,#808080 0 1px,transparent 1px 2px)"></div>
<svg style="left:1362px;top:618px" width="16" height="16" viewBox="0 0 16 16"><path d="M1.500 .5h8l3 3v11h-11z" fill="#fff" stroke="#000"/><path d="M9.500 .5v3h3" fill="#fff" stroke="#000"/><path d="M4 5.500h5M4 7.500h7M4 9.500h7M4 11.500h6" stroke="#000090"/><path d="M2.500 15.500h11v-11" fill="none" stroke="#000"/></svg>
<div class="t ms" style="left:1383px;top:619px">Vehicles (Secret GDI)</div>
<div class="a" style="left:1351px;top:642px;width:12px;height:1px;background:repeating-linear-gradient(to right,#808080 0 1px,transparent 1px 2px)"></div>
<svg style="left:1362px;top:634px" width="16" height="16" viewBox="0 0 16 16"><path d="M1.500 .5h8l3 3v11h-11z" fill="#fff" stroke="#000"/><path d="M9.500 .5v3h3" fill="#fff" stroke="#000"/><path d="M4 5.500h5M4 7.500h7M4 9.500h7M4 11.500h6" stroke="#000090"/><path d="M2.500 15.500h11v-11" fill="none" stroke="#000"/></svg>
<div class="t ms" style="left:1383px;top:635px">Vehicles (Secret Nod)</div>
<div class="a" style="left:1337px;top:658px;width:7px;height:1px;background:repeating-linear-gradient(to right,#808080 0 1px,transparent 1px 2px)"></div>
<div class="a" style="left:1328px;top:654px;width:9px;height:9px;background:#fff;border:1px solid #808080"></div>
<div class="a" style="left:1330px;top:658px;width:5px;height:1px;background:#000"></div>
<div class="a" style="left:1332px;top:656px;width:1px;height:5px;background:#000"></div>
<svg style="left:1344px;top:651px" width="16" height="16" viewBox="0 0 16 16"><path d="M1.500 4v9.500h12v-8.500h-6l-1.500-2h-3.500z" fill="#ece678" stroke="#8a8a3a"/><path d="M2 14h12.500v-9" fill="none" stroke="#000"/><path d="M2.500 5.500h4.500" stroke="#fffff0"/></svg>
<div class="t ms" style="left:1364px;top:651px">Team Purchase Settings</div>
<svg style="left:1305px;top:1033px" width="16" height="16" viewBox="0 0 16 16"><path d="M6.500 2.500h3v4h4v3h-4v4h-3v-4h-4v-3h4z" fill="#18d018" stroke="#003800"/></svg>
<div class="t" style="left:1305px;top:1048.500px;font-size:11px;transform:scaleX(.87)">Add</div>
<svg style="left:1338px;top:1033px" width="16" height="16" viewBox="0 0 16 16"><path d="M8 2l2.500 3h-1.500v2h2v-1.500l3 2.500-3 2.500v-1.500h-2v2h1.500l-2.500 3-2.500-3h1.500v-2h-2v1.500l-3-2.500 3-2.500v1.500h2v-2h-1.500z" fill="#9fe09f" stroke="#2f9a2f" stroke-dasharray="1 1"/></svg>
<div class="t" style="left:1334px;top:1048.500px;font-size:11px;transform:scaleX(.87)">Temp</div>
<svg style="left:1371px;top:1033px" width="16" height="16" viewBox="0 0 16 16"><path d="M8 2v12M2 8h12M3.500 3.500l9 9M12.500 3.500l-9 9" stroke="#9a9a9a" stroke-dasharray="1 1.500"/></svg>
<div class="t" style="left:1368px;top:1048.500px;font-size:11px;transform:scaleX(.87)">Make</div>
<svg style="left:1403px;top:1033px" width="16" height="16" viewBox="0 0 16 16"><path d="M2 14l8-9" stroke="#6b2a10" stroke-width="2.200"/><path d="M8 2l3-1 4 3.500-1.500 1.500-2-1-2 1.500-2.500-2.500z" fill="#e8d020" stroke="#403000" stroke-width=".8"/></svg>
<div class="t" style="left:1402px;top:1048.500px;font-size:11px;transform:scaleX(.87)">Mod</div>
<div class="sep" style="left:1431px;top:1032px;height:30px"></div>
<svg style="left:1442px;top:1032px" width="16" height="17" viewBox="0 0 16 17"><text x="8" y="16.500" text-anchor="middle" font-family="Liberation Sans,sans-serif" font-weight="bold" font-size="20" fill="#f6ea00" stroke="#a09000" stroke-width=".5">?</text></svg>
<div class="t" style="left:1442px;top:1048.500px;font-size:11px;transform:scaleX(.87)">Info</div>
<svg style="left:1474px;top:1033px" width="21" height="17" viewBox="0 0 21 17"><path d="M1.500 6c0-3 1.500-4.500 3.500-4.500h12c1.500 0 2 1 1.500 2.500l-1 2.500c-.5 1.500-.5 2.500-.5 4.500v2c0 1.500-1 2.500-2.500 2.500h-10.500c-1.500 0-2.500-1-2.500-2.500z" fill="#fff" stroke="#10107a"/><path d="M4.500 3.500h10" stroke="#10107a" stroke-dasharray="1 1"/><rect x="3.500" y="7" width="4.500" height="4.500" fill="#2f7fe0" stroke="#10107a" stroke-width=".6"/><path d="M9.500 7.500h5M9.500 9.500h5M9.500 11.500h4" stroke="#10107a"/><path d="M3 14.500h12" stroke="#9090c0"/></svg>
<div class="t" style="left:1475px;top:1048.500px;font-size:11px;transform:scaleX(.82)">Xtra</div>
<svg style="left:1504.500px;top:1045.500px" width="8" height="5" viewBox="0 0 8 5"><path d="M0 0h8l-4 4.500z" fill="#000"/></svg>
<div class="sep" style="left:1518px;top:1032px;height:30px"></div>
<svg style="left:1529px;top:1033px" width="16" height="16" viewBox="0 0 16 16"><path d="M2.500 2.500l11 11M13.500 2.500l-11 11" stroke="#8b0000" stroke-width="1.700"/></svg>
<div class="t" style="left:1530px;top:1048.500px;font-size:11px;transform:scaleX(.87)">Del</div>
<div class="a" style="left:0;top:1076px;width:1600px;height:74px;background:#f0f0f0;border-top:1px solid #fff"></div>
<div class="a" style="left:0;top:1076px;width:1287px;height:1px;background:#dfe3e8"></div>
<div class="a" style="left:4px;top:1082px;width:1595px;height:62px;background:#f0f0f0;box-shadow:inset 1px 1px #828282,inset -1px -1px #fff,inset 2px 2px #a0a0a0"></div>
<div class="t" style="left:7.5px;top:1085px;font-size:12.6px;transform:scaleX(.868)">Obsolete deform chunk encountered in mesh: .DUMMY</div>
<div class="t" style="left:7.5px;top:1098px;font-size:12.6px;transform:scaleX(.868)">Attempting to load: C:\Program Files\RenegadePublicTools\LevelEdit\test\characters\havoc\FullMoon.tga</div>
<div class="t" style="left:7.5px;top:1111px;font-size:12.6px;transform:scaleX(.868)">Attempting to load: C:\Program Files\RenegadePublicTools\LevelEdit\test\characters\FullMoon.tga</div>
<div class="a" style="left:1582px;top:1085px;width:16px;height:57px;background:#f4f4f4"></div>
<svg style="left:1586px;top:1091px" width="9" height="5" viewBox="0 0 9 5"><path d="M0 5l4.500-5 4.500 5z" fill="#505050"/></svg>
<svg style="left:1586px;top:1132px" width="9" height="5" viewBox="0 0 9 5"><path d="M0 0l4.500 5 4.500-5z" fill="#505050"/></svg>
<div class="a" style="left:1583px;top:1110px;width:15px;height:15px;border:1px solid #979797;border-radius:2px;background:linear-gradient(to right,#f6f6f6,#e4e4e4 50%,#d2d2d2 50%,#dedede)"></div>
<div class="a" style="left:0;top:1149px;width:1600px;height:21px;background:#f0f0f0;border-top:1px solid #c8c8c8"></div>
<div class="a" style="left:0;top:1150px;width:1600px;height:1px;background:#fff"></div>
<div class="t" style="left:2px;top:1155px;font-size:12.3px;transform:scaleX(.89)">Ready</div>
<div class="a thin" style="left:1120px;top:1153px;width:175px;height:18px"></div>
<div class="t" style="left:1123px;top:1155px;font-size:12.3px;transform:scaleX(.9)">Camera (0.00,0.00,80.00)</div>
<div class="a thin" style="left:1298px;top:1153px;width:89px;height:18px"></div>
<div class="a thin" style="left:1389px;top:1153px;width:115px;height:18px"></div>
<div class="a thin" style="left:1506px;top:1153px;width:93px;height:18px"></div>
<div class="t" style="left:1509px;top:1155px;font-size:12.3px;transform:scaleX(.9)">Polygons 123456</div>
<div class="a" style="left:0;top:1170px;width:1600px;height:30px;background:linear-gradient(to bottom,#0f2236 0,#0f2236 1px,rgba(200,230,250,.62) 1px,rgba(200,230,250,.62) 2px,rgba(255,255,255,.28) 2px,rgba(255,255,255,.14) 5px,rgba(10,40,70,.24) 9px,rgba(10,40,70,.16) 11px,rgba(0,0,0,0) 16px,rgba(0,0,0,0) 30px),linear-gradient(to right,#2a7bb0 0,#3388c0 120px,#3a92cc 330px,#3590cc 480px,#2e86c6 600px,#2b80c4 700px,#2d82c6 800px,#2878c0 900px,#2572bc 1000px,#226ab4 1100px,#1f60a8 1180px,#1c5090 1240px,#1b4a84 1300px,#1a4880 1600px)"></div>
<div class="a" style="left:60px;top:1170px;width:43px;height:30px;border:1px solid rgba(10,40,70,.8);border-radius:3px;background:linear-gradient(to bottom,rgba(255,255,255,.22) 0,rgba(255,255,255,.08) 48%,rgba(255,255,255,0.03) 52%,rgba(255,255,255,.08) 100%),#3a86bd;box-shadow:inset 0 0 0 1px rgba(215,238,255,.55)"></div>
<div class="a" style="left:137px;top:1170px;width:11px;height:30px;border:1px solid rgba(10,40,70,.75);border-radius:3px;background:rgba(255,255,255,.18);box-shadow:inset 0 0 0 1px rgba(255,255,255,.35)"></div>
<div class="a" style="left:137px;top:1170px;width:7px;height:30px;border:1px solid rgba(10,40,70,.75);border-radius:3px;background:rgba(255,255,255,.12);box-shadow:inset 0 0 0 1px rgba(255,255,255,.35)"></div>
<div class="a" style="left:106px;top:1170px;width:35px;height:30px;border:1px solid rgba(10,40,70,.8);border-radius:3px;background:linear-gradient(to bottom,rgba(255,255,255,.22) 0,rgba(255,255,255,.08) 48%,rgba(255,255,255,0.03) 52%,rgba(255,255,255,.08) 100%),#3a86bd;box-shadow:inset 0 0 0 1px rgba(215,238,255,.55)"></div>
<div class="a" style="left:186px;top:1170px;width:10px;height:30px;border:1px solid rgba(10,40,70,.75);border-radius:3px;background:rgba(255,255,255,.18);box-shadow:inset 0 0 0 1px rgba(255,255,255,.35)"></div>
<div class="a" style="left:186px;top:1170px;width:7px;height:30px;border:1px solid rgba(10,40,70,.75);border-radius:3px;background:rgba(255,255,255,.12);box-shadow:inset 0 0 0 1px rgba(255,255,255,.35)"></div>
<div class="a" style="left:152px;top:1170px;width:38px;height:30px;border:1px solid rgba(10,40,70,.8);border-radius:3px;background:linear-gradient(to bottom,rgba(255,255,255,.22) 0,rgba(255,255,255,.08) 48%,rgba(255,255,255,0.03) 52%,rgba(255,255,255,.08) 100%),#3a86bd;box-shadow:inset 0 0 0 1px rgba(215,238,255,.55)"></div>
<div class="a" style="left:198px;top:1170px;width:43px;height:30px;border:1px solid rgba(10,40,70,.8);border-radius:3px;background:linear-gradient(to bottom,rgba(255,255,255,.22) 0,rgba(255,255,255,.08) 48%,rgba(255,255,255,0.03) 52%,rgba(255,255,255,.08) 100%),#3a86bd;box-shadow:inset 0 0 0 1px rgba(215,238,255,.55)"></div>
<div class="a" style="left:278px;top:1170px;width:9px;height:30px;border:1px solid rgba(10,40,70,.75);border-radius:3px;background:rgba(255,255,255,.18);box-shadow:inset 0 0 0 1px rgba(255,255,255,.35)"></div>
<div class="a" style="left:278px;top:1170px;width:6px;height:30px;border:1px solid rgba(10,40,70,.75);border-radius:3px;background:rgba(255,255,255,.12);box-shadow:inset 0 0 0 1px rgba(255,255,255,.35)"></div>
<div class="a" style="left:244px;top:1170px;width:38px;height:30px;border:1px solid rgba(10,40,70,.8);border-radius:3px;background:linear-gradient(to bottom,rgba(255,255,255,.55) 0,rgba(255,255,255,.35) 48%,rgba(255,255,255,0.14) 52%,rgba(255,255,255,.35) 100%),#3a86bd;box-shadow:inset 0 0 0 1px rgba(215,238,255,.55)"></div>
<div class="a" style="left:290px;top:1170px;width:43px;height:30px;border:1px solid rgba(10,40,70,.8);border-radius:3px;background:linear-gradient(to bottom,rgba(255,255,255,.22) 0,rgba(255,255,255,.08) 48%,rgba(255,255,255,0.03) 52%,rgba(255,255,255,.08) 100%),#3a86bd;box-shadow:inset 0 0 0 1px rgba(215,238,255,.55)"></div>
<div class="a" style="left:9px;top:1166px;width:37px;height:37px;border-radius:50%;background:radial-gradient(circle at 50% 100%,#40e8ff 0,#18b0e8 14%,#0f6cb0 34%,#0c4a86 55%,#2a6a9c 78%,#6a9cc0 100%);box-shadow:0 0 0 1px rgba(15,45,75,.85),inset 0 0 0 1px rgba(170,210,240,.75)"></div>
<div class="a" style="left:12px;top:1167px;width:31px;height:15px;border-radius:15px 15px 45% 45%;background:linear-gradient(to bottom,rgba(255,255,255,.5),rgba(255,255,255,.08))"></div>
<svg style="left:17.500px;top:1169px" width="22" height="27" viewBox="0 0 22 24" preserveAspectRatio="none"><path d="M3 3.500c3-1.500 5.500-1.500 8 0l-1.800 7.500c-2.500-1.500-5-1.500-8 0z" fill="#f0601f"/><path d="M12.300 4c3 1.500 5.500 1.500 8.500 0l-1.800 7.500c-3 1.500-5.500 1.500-8.500 0z" fill="#8cc63e"/><path d="M.8 12.500c3-1.500 5.500-1.500 8 0l-1.800 7.500c-2.500-1.500-5-1.500-8 0z" fill="#3aa6e6"/><path d="M10.100 13c3 1.500 5.500 1.500 8.500 0l-1.800 7.500c-3 1.500-5.500 1.500-8.500 0z" fill="#fcc12a"/></svg>
<svg style="left:72px;top:1176px" width="20" height="18" viewBox="0 0 20 18"><path d="M1 3.500h6l1 1.500h10v11h-17z" fill="#f3e7a0" stroke="#c9b65a" stroke-width=".8"/><rect x="2" y="6" width="15" height="8" fill="#fbf4c8"/><rect x="4.500" y="9.500" width="11" height="7" fill="#8fd0f0" stroke="#e8f6fc" stroke-width="1.200"/><rect x="7.500" y="13" width="5" height="3.500" fill="#f3e7a0"/></svg>
<svg style="left:114px;top:1175px" width="18" height="18" viewBox="0 0 18 18"><circle cx="9" cy="9" r="8" fill="#e8701a"/><circle cx="10.500" cy="7" r="4.500" fill="#2a55b0"/><path d="M1.500 6c1 6 6 9 12 7-3 4-11 3-12.500-3z" fill="#f9a11b"/><path d="M2 3l2 3 3-1.500 2 2.500-3 1.500" fill="#e8701a"/><circle cx="11.500" cy="5.500" r="1.500" fill="#7fb0ec"/></svg>
<svg style="left:159px;top:1176px" width="24" height="18" viewBox="0 0 24 18"><circle cx="8" cy="4.500" r="3" fill="#4da832"/><circle cx="15" cy="4" r="3" fill="#5a9ad8"/><path d="M3 15c0-5 2-7 5-7s5 2 5 7z" fill="#4da832"/><path d="M11 14c0-5 2-7 5-7s5 2 5 7z" fill="#7ab2e4"/><path d="M2 10c5-2 12 2 20 1l-1 3c-8 1-14-3-19-1z" fill="#f2b02a"/></svg>
<svg style="left:210px;top:1174px" width="22" height="22" viewBox="0 0 22 22"><path d="M3 2h15v17l-2 1h-13z" fill="#f4f4f0" stroke="#b0b0a8" stroke-width=".8"/><path d="M5 6h9M5 9h8M5 12h6M5 15h5" stroke="#a8b0b8"/><path d="M7 16l10-12 2.500 2-10 12-3.500 1z" fill="#f4c430" stroke="#a07818" stroke-width=".8"/><path d="M17 4l2.500 2" stroke="#d04040" stroke-width="1.600"/></svg>
<svg style="left:254px;top:1177px" width="17" height="16" viewBox="0 0 16 16"><rect width="16" height="16" fill="#1f9a86"/><path d="M3 12.500L11 4.500M12.500 12.500L5 5" stroke="#fff" stroke-width="2.600" stroke-linecap="round"/><path d="M3 5a2.300 2.300 0 1 0 3-2" fill="none" stroke="#fff" stroke-width="1.600"/><path d="M10 3l3.500 3" stroke="#fff" stroke-width="2.400"/><path d="M3.500 12L10.500 5M11.500 12L6 6.500" stroke="#26313a" stroke-width=".7"/></svg>
<svg style="left:302px;top:1175px" width="22" height="20" viewBox="0 0 22 20"><path d="M2 12c0-5 4-8 8-8 4 0 6 2 6 5s-3 2-4 4 1 4-3 4c-4 0-7-2-7-5z" fill="#e8ecf4" stroke="#b8c0d0" stroke-width=".6"/><circle cx="5.500" cy="11" r="1.500" fill="#e04040"/><circle cx="8" cy="7.500" r="1.500" fill="#f0c030"/><circle cx="12" cy="7" r="1.500" fill="#40a840"/><circle cx="8" cy="14" r="1.500" fill="#4070d0"/><path d="M17.500 3v14" stroke="#e89020" stroke-width="2.200"/><path d="M17.500 0v4" stroke="#c07018" stroke-width="1.400"/></svg>
<div class="t" style="left:1264px;top:1178.500px;font-size:12.300px;color:#fff;text-shadow:0 0 2px rgba(0,0,0,.5);transform:scaleX(1.0)">Brenbot</div>
<div class="t" style="left:1313px;top:1172px;font-size:14px;color:#fff;text-shadow:0 0 2px rgba(0,0,0,.5);transform:scaleX(1.1)">»</div>
<div class="t" style="left:1333px;top:1178.500px;font-size:12.300px;color:#fff;text-shadow:0 0 2px rgba(0,0,0,.5);transform:scaleX(1.0)">br</div>
<div class="t" style="left:1352px;top:1172px;font-size:14px;color:#fff;text-shadow:0 0 2px rgba(0,0,0,.5);transform:scaleX(1.1)">»</div>
<svg style="left:1370px;top:1177px" width="17" height="17" viewBox="0 0 17 17"><circle cx="8.500" cy="8.500" r="7.500" fill="#9a9aa0" stroke="#e8e8ec" stroke-width="1.500"/><circle cx="8.500" cy="4.500" r="2" fill="#f4f4f4"/><circle cx="5" cy="10.500" r="2" fill="#f4f4f4"/><circle cx="12" cy="10.500" r="2" fill="#f4f4f4"/></svg>
<svg style="left:1395px;top:1175px" width="17" height="19" viewBox="0 0 17 19"><path d="M1 18v-8l5-4 5 4v8z" fill="#f09a20"/><path d="M11 18v-9h5v9z" fill="#d87a10"/><path d="M6 1v8" stroke="#fff" stroke-width="1.200"/><path d="M6 1h6v3.500h-6z" fill="#f0a030"/><rect x="5" y="11" width="2.500" height="5" fill="#fff"/></svg>
<svg style="left:1419px;top:1177px" width="17" height="17" viewBox="0 0 17 17"><circle cx="8.500" cy="8.500" r="8" fill="#e8c020"/><circle cx="8.500" cy="8.500" r="5.500" fill="#f8e060"/><circle cx="8.500" cy="8.500" r="2.500" fill="#fff"/><circle cx="8.500" cy="8.500" r="1.200" fill="#806010"/></svg>
<svg style="left:1443px;top:1176px" width="18" height="19" viewBox="0 0 18 19"><path d="M2.500 1v17" stroke="#fff" stroke-width="1.600"/><path d="M4 2c3-1.500 5 1.500 8 0l3 1.500-2 3.500 1 3c-3 1.500-5-1.500-10 0z" fill="#fff"/></svg>
<svg style="left:1467px;top:1178px" width="16" height="15" viewBox="0 0 18 15"><rect x="1" y="12" width="2.500" height="3" fill="#fff"/><rect x="4.500" y="9.500" width="2.500" height="5.500" fill="#fff"/><rect x="8" y="7" width="2.500" height="8" fill="#fff"/><rect x="11.500" y="4" width="2.500" height="11" fill="#fff"/><rect x="15" y="0.500" width="2.500" height="14.500" fill="#d8e4f0" opacity=".8"/></svg>
<svg style="left:1490px;top:1176px" width="18" height="18" viewBox="0 0 18 18"><path d="M1.500 6.500h3l4.500-4.500v14l-4.500-4.500h-3z" fill="#fff"/><path d="M11 6c1.200 1.500 1.200 4.500 0 6M13.500 4c2 3 2 7 0 10" stroke="#fff" stroke-width="1.300" fill="none"/></svg>
<div class="t" style="left:1524px;top:1178.500px;font-size:12.300px;color:#fff;text-shadow:0 0 2px rgba(0,0,0,.5);transform:scaleX(.97)">11:51 AM</div>
<div class="a" style="left:1586px;top:1171px;width:14px;height:29px;border-left:1px solid rgba(10,30,50,.7);background:linear-gradient(135deg,rgba(255,255,255,.45),rgba(255,255,255,.1) 50%,rgba(255,255,255,.02));box-shadow:inset 1px 0 rgba(255,255,255,.4)"></div>
<div class="a" style="left:574px;top:338px;width:452px;height:494px;border:1px solid #121c28;border-radius:1px;box-shadow:0 3px 12px 2px rgba(0,0,0,.78),0 0 3px rgba(0,0,0,.6),inset 0 0 0 1px rgba(240,250,255,.92);background:linear-gradient(to bottom,rgba(60,95,140,0) 26px,rgba(60,95,140,.45) 60px),radial-gradient(ellipse 75px 16px at 42px 12px,rgba(255,255,255,.5),rgba(255,255,255,0)),linear-gradient(to bottom,rgba(255,255,255,.10) 0,rgba(255,255,255,0) 22px),linear-gradient(to right,#94abc4 0,#8aa3bf 14%,#7b99b9 28%,#7c9bbc 50%,#8eaac7 66%,#a8bfd7 79%,#a2bad3 92%,#8ea9c5 100%)"></div>
<div class="a" style="left:580px;top:362px;width:440px;height:464px;border:1px solid #10161e;background:#f0f0f0;box-shadow:inset 1px 1px #fff,inset -1px -1px #fff,0 0 0 1px rgba(235,248,255,.9)"></div>
<div class="t" style="left:582.5px;top:344.3px;font-size:12.3px;transform:scaleX(1.0)">Edit object</div>
<div class="a" style="left:1003px;top:344px;width:16px;height:15px;border:1px solid #5c2a22;border-radius:3px;background:linear-gradient(to bottom,#e8a694 0,#d77c64 45%,#c14a2c 50%,#d0633f 100%);box-shadow:inset 0 0 0 1px rgba(255,220,210,.6)"></div>
<svg style="left:1007px;top:347.5px" width="8" height="8" viewBox="0 0 9 9"><path d="M1.500 1.500l6 6M7.500 1.500l-6 6" stroke="#4a3a3a" stroke-width="3.200"/><path d="M1.500 1.500l6 6M7.500 1.500l-6 6" stroke="#fff" stroke-width="1.800"/></svg>
<div class="a rais" style="left:589px;top:391px;width:423px;height:398px"></div>
<div class="a" style="left:591px;top:373px;width:47px;height:18px;background:#f0f0f0;border-radius:2px 2px 0 0;box-shadow:inset 1px 1px #fff,inset -1px 0 #696969,inset -2px 0 #a0a0a0"></div>
<div class="t ms" style="left:596px;top:374.9px;">General</div>
<div class="a" style="left:691px;top:373px;width:80px;height:18px;background:#f0f0f0;border-radius:2px 2px 0 0;box-shadow:inset 1px 1px #fff,inset -1px 0 #696969,inset -2px 0 #a0a0a0"></div>
<div class="t ms" style="left:695.5px;top:374.9px;">Dependencies</div>
<div class="a" style="left:636px;top:371px;width:55px;height:22px;background:#f0f0f0;border-radius:2px 2px 0 0;box-shadow:inset 1px 1px #fff,inset -1px 0 #696969,inset -2px 0 #a0a0a0"></div>
<div class="t ms" style="left:645.5px;top:372.6px;">Settings</div>
<div class="t ms" style="left:603px;top:410.6px;">Team</div>
<div class="a sunk" style="left:636px;top:407px;width:334px;height:21px;background:#fff"></div>
<div class="a rais" style="left:952px;top:409px;width:16px;height:17px"></div>
<svg style="left:957px;top:416px" width="7" height="4" viewBox="0 0 7 4"><path d="M0 0h7l-3.500 4z" fill="#000"/></svg>
<div class="t ms" style="left:641px;top:410.6px;">GDI</div>
<div class="t ms" style="left:603px;top:441.6px;">Team</div>
<div class="a sunk" style="left:636px;top:438px;width:334px;height:21px;background:#fff"></div>
<div class="a rais" style="left:952px;top:440px;width:16px;height:17px"></div>
<svg style="left:957px;top:447px" width="7" height="4" viewBox="0 0 7 4"><path d="M0 0h7l-3.500 4z" fill="#000"/></svg>
<div class="t ms" style="left:641px;top:441.6px;transform:scaleX(.81)">Character Classes</div>
<div class="a" style="left:602px;top:480px;width:9px;height:2px;border-top:1px solid #a0a0a0;border-bottom:1px solid #fff"></div>
<div class="a" style="left:646px;top:480px;width:324px;height:2px;border-top:1px solid #a0a0a0;border-bottom:1px solid #fff"></div>
<div class="t ms" style="left:612px;top:473.6px;transform:scaleX(.79)">Entry 1</div>
<div class="t ms" style="left:602.5px;top:504.6px;">Name</div>
<div class="a sunk" style="left:602px;top:521px;width:368px;height:24px"></div>
<div class="a rais" style="left:947px;top:523px;width:22px;height:21px"></div>
<svg style="left:952px;top:526px" width="13" height="15" viewBox="0 0 13 15"><path d="M1.500 .5h7l3 3v10h-10z" fill="#fff" stroke="#000"/><path d="M8.500 .5v3h3" fill="#fff" stroke="#000"/><path d="M3.500 3.500h4M3.500 5.500h6M3.500 7.500h6M3.500 9.500h6M3.500 11.500h5" stroke="#6a6ad8" stroke-width="1"/></svg>
<div class="t ms" style="left:606px;top:526.6px;transform:scaleX(.844)">IDS_Enc_Char_GDI_MinigunnerOfficer_Name</div>
<div class="t ms" style="left:602.5px;top:559.6px;">Cost</div>
<div class="a sunk" style="left:630px;top:556px;width:334px;height:21px;background:#fff"></div>
<div class="a rais" style="left:946px;top:558px;width:16px;height:8px"></div>
<div class="a rais" style="left:946px;top:566px;width:16px;height:9px"></div>
<svg style="left:952px;top:560px" width="5" height="3" viewBox="0 0 5 3"><path d="M0 3h5l-2.500-3z" fill="#000"/></svg>
<svg style="left:952px;top:569px" width="5" height="3" viewBox="0 0 5 3"><path d="M0 0h5l-2.500 3z" fill="#000"/></svg>
<div class="t ms" style="left:633px;top:557.1px;">175</div>
<div class="t ms" style="left:603px;top:586.6px;">Texture</div>
<div class="a sunk" style="left:602px;top:603px;width:368px;height:20px;background:#fff"></div>
<div class="t ms" style="left:604.5px;top:604.6px;">hud_cnc_GOffShot.tga</div>
<div class="t ms" style="left:602.5px;top:639.6px;">Object</div>
<div class="a sunk" style="left:640px;top:634px;width:330px;height:24px"></div>
<div class="a rais" style="left:947px;top:636px;width:22px;height:21px"></div>
<svg style="left:952px;top:639px" width="13" height="15" viewBox="0 0 13 15"><rect x="1" y="-1" width="5" height="5" fill="#000"/><rect x="2" y="0" width="3" height="3" fill="#f0e83a"/><rect x="6" y="4" width="5" height="5" fill="#000"/><rect x="7" y="5" width="3" height="3" fill="#d81818"/><rect x="6" y="10" width="5" height="5" fill="#000"/><rect x="7" y="11" width="3" height="3" fill="#20c828"/><path d="M3.500 4v8.500h3" stroke="#000" fill="none"/><path d="M0 6h6.500l-2 3.500h-1.500z" fill="#000"/></svg>
<div class="t ms" style="left:644.5px;top:639.6px;transform:scaleX(.805)">CnC_GDI_MiniGunner_1Off</div>
<div class="t ms" style="left:602.5px;top:668.6px;">Alt Texture 1</div>
<div class="a sunk" style="left:602px;top:685px;width:368px;height:20px;background:#fff"></div>
<div class="t" style="left:629.5px;top:689.5px;font-size:13.5px;font-weight:bold;color:#14142a;transform:scaleX(.93)">pt image</div>
<div class="t ms" style="left:602.5px;top:721.6px;transform:scaleX(.80)">Alt Object 1</div>
<div class="a sunk" style="left:664px;top:716px;width:306px;height:24px"></div>
<div class="a rais" style="left:947px;top:718px;width:22px;height:21px"></div>
<svg style="left:952px;top:721px" width="13" height="15" viewBox="0 0 13 15"><rect x="1" y="-1" width="5" height="5" fill="#000"/><rect x="2" y="0" width="3" height="3" fill="#f0e83a"/><rect x="6" y="4" width="5" height="5" fill="#000"/><rect x="7" y="5" width="3" height="3" fill="#d81818"/><rect x="6" y="10" width="5" height="5" fill="#000"/><rect x="7" y="11" width="3" height="3" fill="#20c828"/><path d="M3.500 4v8.500h3" stroke="#000" fill="none"/><path d="M0 6h6.500l-2 3.500h-1.500z" fill="#000"/></svg>
<div class="t" style="left:692px;top:716.5px;font-size:13.5px;font-weight:bold;color:#14142a;transform:scaleX(.93)">Preset</div>
<div class="t ms" style="left:602px;top:750.6px;">Alt Texture 2</div>
<div class="a" style="left:602px;top:767px;width:368px;height:13px;overflow:hidden"><div class="a sunk" style="left:0;top:0;width:368px;height:20px;background:#fff"></div></div>
<div class="a" style="left:981px;top:397px;width:17px;height:383px;background:repeating-conic-gradient(#fff 0 25%,#e6e6e6 0 50%) 0 0/2px 2px"></div>
<div class="a rais" style="left:981px;top:397px;width:17px;height:17px"></div><svg style="left:986px;top:403px" width="7" height="4" viewBox="0 0 7 4"><path d="M0 4h7l-3.500-4z" fill="#000"/></svg>
<div class="a rais" style="left:981px;top:414px;width:17px;height:17px"></div>
<div class="a rais" style="left:981px;top:763px;width:17px;height:17px"></div><svg style="left:986px;top:770px" width="7" height="4" viewBox="0 0 7 4"><path d="M0 0h7l-3.500 4z" fill="#000"/></svg>
<div class="a" style="left:732px;top:795px;width:75px;height:23px;border:1px solid #4a4a4a"><div class="a rais" style="left:0;top:0;width:73px;height:21px"></div><div class="a" style="left:3px;top:3px;width:67px;height:15px;border:1px dotted #000"></div></div>
<div class="t ms" style="left:760.5px;top:798.6px;">OK</div>
<div class="a rais" style="left:813px;top:795px;width:75px;height:23px"></div>
<div class="t ms" style="left:834px;top:798.6px;">Cancel</div>
<div class="a rais" style="left:900px;top:795px;width:112px;height:23px"></div>
<div class="t ms" style="left:913.5px;top:798.6px;transform:scaleX(.816)">OK &amp; Propagate...</div>
<svg style="left:0;top:0" width="1600" height="1200" viewBox="0 0 1600 1200"><path d="M602 680C603.8 679.0 608.8 675.8 612.5 674C616.2 672.2 619.8 670.8 624 669.4C628.2 668.0 630.9 666.4 637.5 665.5C644.1 664.6 655.0 664.3 663.7 664.2C672.5 664.1 681.3 664.6 690 664.7C698.7 664.8 707.2 664.8 716 665C724.8 665.2 733.7 665.7 742.5 666C751.3 666.3 760.0 666.5 768.7 666.8C777.5 667.1 787.1 667.5 795 667.6C802.9 667.7 809.5 667.3 816 667.6C822.5 667.9 826.6 668.7 834 669.4C841.4 670.1 851.8 671.6 860.6 672C869.4 672.4 875.9 672.0 886.8 672C897.7 672.0 915.0 672.0 926 672C937.0 672.0 945.0 672.2 952.5 672.3C960.0 672.4 966.0 672.2 970.8 672.8C975.6 673.4 978.2 674.6 981.3 676C984.4 677.4 987.5 679.2 989.2 681.2C991.0 683.2 991.6 684.3 991.8 687.8C992.0 691.3 991.1 696.7 990.5 702.2C989.9 707.7 988.8 714.9 987.9 720.6C987.0 726.3 986.4 731.6 985.3 736.4C984.2 741.2 982.8 746.7 981.3 749.5C979.8 752.3 980.8 752.3 976 753.4C971.2 754.5 960.8 755.2 952.5 756C944.2 756.8 937.2 757.2 926.2 757.9C915.2 758.6 897.7 759.3 886.8 760C875.9 760.7 869.4 761.2 860.6 762C851.9 762.8 840.9 764.4 834.3 764.7C827.7 765.0 827.8 764.6 821.2 764C814.7 763.4 803.8 762.0 795 761.3C786.2 760.5 777.5 760.1 768.7 759.5C760.0 758.9 751.2 758.5 742.5 757.9C733.8 757.3 725.0 756.5 716.2 756C707.5 755.5 698.8 755.1 690 754.7C681.2 754.3 671.1 754.0 663.7 753.4C656.3 752.8 651.5 752.1 645.4 750.8C639.3 749.5 632.7 747.5 627 745.5C621.3 743.5 615.6 741.6 611.2 739C606.8 736.4 603.3 733.3 600.7 729.8C598.1 726.3 596.6 721.7 595.5 718C594.4 714.3 594.0 711.4 594.2 707.5C594.4 703.6 595.9 697.9 596.8 694.4C597.7 690.9 598.4 689.1 599.4 686.5C600.4 683.9 600.6 681.2 603 679C605.4 676.8 612.2 674.4 614 673.5" fill="none" stroke="#000" stroke-width="1.15" stroke-linejoin="round"/><path d="M624 745.500L634 749.500" fill="none" stroke="#000" stroke-width="1.600"/><path d="M1025 352.400 L1363.500 448" stroke="#000" stroke-width="4.700" stroke-linecap="round"/></svg>
</body></html>
